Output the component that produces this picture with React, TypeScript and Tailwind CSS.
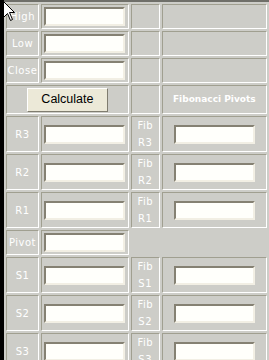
import React from 'react'

const cell = 'p-0 text-center align-middle border border-t-[#a09f90] border-l-[#a09f90] border-b-white border-r-white'
const label = 'text-[10px] text-white tracking-[0.5px] font-["DejaVu_Sans",Verdana,sans-serif] leading-[17px]'

function Field() {
  return (
    <input
      type="text"
      className="block mx-auto w-[81px] h-[19px] bg-[#fffffb] border-2 border-t-[#858173] border-l-[#858173] border-b-[#f2efe4] border-r-[#f2efe4] outline-none"
    />
  )
}

function InputRow({ name }: { name: string }) {
  return (
    <tr>
      <td className={`${cell} w-[33px] h-[25px] ${label}`}>{name}</td>
      <td className={`${cell} w-[88px] h-[25px]`}>
        <Field />
      </td>
      <td className={`${cell} w-[29px] h-[25px]`}></td>
      <td className={`${cell} w-[106px] h-[25px]`}></td>
    </tr>
  )
}

function LevelRow({ name }: { name: string }) {
  return (
    <tr>
      <td className={`${cell} h-[36px] ${label}`}>{name}</td>
      <td className={`${cell} h-[36px]`}>
        <Field />
      </td>
      <td className={`${cell} h-[36px] ${label}`}>
        Fib
        <br />
        {name}
      </td>
      <td className={`${cell} h-[36px]`}>
        <Field />
      </td>
    </tr>
  )
}

export default function App() {
  return (
    <div className="relative w-[269px] h-[360px] overflow-hidden bg-[#cdcdc8] flex">
      {/* window edge */}
      <div className="w-[4px] h-full bg-black shrink-0" />
      <div className="flex-1 border-t-2 border-[#6f6f69]">
        <table className="border-separate border-spacing-[2px] table-fixed">
          <tbody>
            <InputRow name="High" />
            <InputRow name="Low" />
            <InputRow name="Close" />
            <tr>
              <td colSpan={2} className={`${cell} h-[29px]`}>
                <button className="mx-auto block w-[81px] h-[24px] bg-[#ece9d8] border border-t-white border-l-white border-b-[#7f7c6f] border-r-[#7f7c6f] text-black text-[12.5px] font-['Liberation_Sans',Arial,sans-serif]">
                  Calculate
                </button>
              </td>
              <td className={`${cell} h-[29px]`}></td>
              <td className={`${cell} h-[29px] text-white text-[9px] font-bold font-['DejaVu_Sans',Verdana,sans-serif]`}>
                Fibonacci Pivots
              </td>
            </tr>
            <LevelRow name="R3" />
            <LevelRow name="R2" />
            <LevelRow name="R1" />
            <tr>
              <td className={`${cell} h-[25px] ${label}`}>Pivot</td>
              <td className={`${cell} h-[25px]`}>
                <Field />
              </td>
            </tr>
            <LevelRow name="S1" />
            <LevelRow name="S2" />
            <LevelRow name="S3" />
          </tbody>
        </table>
      </div>

      {/* mouse pointer */}
      <svg className="absolute left-[3px] top-[1px]" width="13" height="21" viewBox="0 0 13 21">
        <path d="M0.5 0.5 L0.5 16.5 L4.5 12.5 L7.5 19.5 L9.5 18.5 L6.5 11.5 L11.5 11.5 Z" fill="white" stroke="black" strokeWidth="1" />
      </svg>
    </div>
  )
}
